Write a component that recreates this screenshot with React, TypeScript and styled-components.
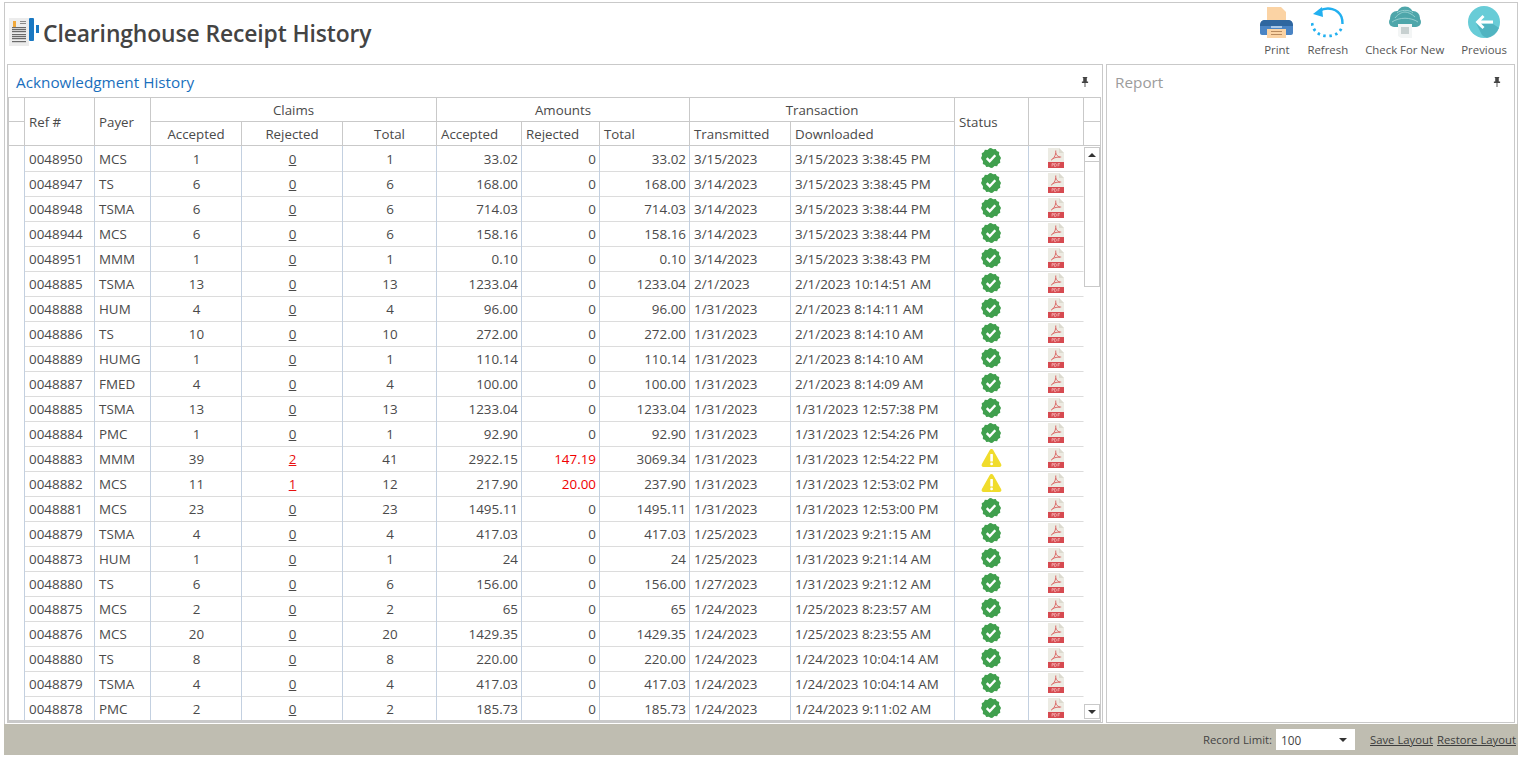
import React from "react";
import styled, { createGlobalStyle, css } from "styled-components";

const Global = createGlobalStyle`
  html, body { margin: 0; padding: 0; background: #fff; height: 100%; overflow: hidden; }
  body { font-family: "Open Sans", "Noto Sans", "Liberation Sans", sans-serif; color: #444; }
  #root { height: 100%; }
  * { box-sizing: border-box; }
`;

const COLS = "16px 70px 56px 91px 101px 94px 85px 78px 90px 101px 164px 74px 55px 16px";
const LINE = "#c9c9c9";
const ROWLINE = "#dcdcdc";
const VLINE = "#c3d0e0";

const Page = styled.div`
  width: 1521px; height: 758px; padding: 2px 3px 3px 4px; display: flex; flex-direction: column;
`;
const Frame = styled.div`
  flex: 1; min-height: 0; display: flex; flex-direction: column;
  border: 1px solid ${LINE}; border-bottom: none;
`;
const Header = styled.header`
  height: 60px; flex: none; display: flex; align-items: stretch; justify-content: space-between;
  padding: 0 10px 0 4px;
`;
const TitleGroup = styled.div`display: flex; align-items: flex-start; padding-top: 15px; gap: 3px;`;
const Title = styled.h1`
  margin: 0; font-size: 22.85px; line-height: 32px; font-weight: 600; color: #444; letter-spacing: -0.1px;
`;
const Toolbar = styled.nav`display: flex; gap: 17px; padding-top: 3px;`;
const ToolButton = styled.div<{ $pull?: boolean }>`
  display: flex; flex-direction: column; align-items: center; font-size: 11.4px; color: #555; line-height: 16px; white-space: nowrap;
  margin-left: ${p => (p.$pull ? "-3px" : "0")};
  svg { display: block; margin-bottom: 4px; }
`;
const Panels = styled.main`
  flex: 1; min-height: 0; display: flex; gap: 3px; padding: 1px 0 0 2px;
`;
const Panel = styled.section<{ $w: number }>`
  width: ${p => p.$w}px; flex: none; height: 659px; border: 1px solid ${LINE}; display: flex; flex-direction: column; background: #fff;
`;
const PanelHead = styled.div<{ $muted?: boolean }>`
  height: 32px; flex: none; display: flex; align-items: center; justify-content: space-between;
  padding: 1px 13px 0 8px; font-size: 15.3px; color: ${p => (p.$muted ? "#9c9c9c" : "#1a6fbd")};
`;
const Grid = styled.div`
  flex: 1; min-height: 0; margin-right: 1px; border: 1px solid ${LINE}; border-bottom-width: 2px; display: flex; flex-direction: column;
`;
const HeadGrid = styled.div`
  display: grid; grid-template-columns: ${COLS}; grid-template-rows: 24px 23px; flex: none; border-bottom: 1px solid ${LINE};
`;
const hc = css`
  border-right: 1px solid ${LINE}; font-size: 13.3px; color: #4a4a4a; display: flex; align-items: center; white-space: nowrap; min-width: 0;
`;
const HeadCell = styled.div<{ $col: string; $row: string; $align?: string; $line?: boolean; $end?: boolean }>`
  ${hc};
  grid-column: ${p => p.$col}; grid-row: ${p => p.$row};
  justify-content: ${p => p.$align || "flex-start"};
  padding: 0 4px;
  ${p => p.$line && `border-bottom: 1px solid ${LINE};`}
  ${p => p.$end && `border-right: none;`}
`;
const BodyArea = styled.div`flex: 1; min-height: 0; display: flex; position: relative; overflow: hidden;`;
const Rows = styled.div`flex: 1; min-width: 0;`;
const Row = styled.div`
  display: grid; grid-template-columns: ${COLS}; height: 25px;
`;
const Cell = styled.div<{ $align?: string; $red?: boolean; $blank?: boolean }>`
  border-right: 1px solid ${VLINE};
  border-bottom: ${p => (p.$blank ? "none" : `1px solid ${ROWLINE}`)};
  padding: 1px 3px 0 4px; font-size: 13.4px; line-height: 24px; color: ${p => (p.$red ? "#f00000" : "#4a4a4a")};
  text-align: ${p => p.$align || "left"}; white-space: nowrap;
`;
const Linked = styled.span<{ $red?: boolean }>`text-decoration: underline; color: ${p => (p.$red ? "#e81010" : "#4a4a4a")};`;
const IconCell = styled.div`
  border-right: 1px solid ${VLINE}; border-bottom: 1px solid ${ROWLINE}; display: flex; justify-content: center; align-items: center; padding: 0 1px 2px 0;
`;
const PdfCell = styled.div`
  border-bottom: 1px solid ${ROWLINE}; display: flex; justify-content: center; align-items: center; padding-right: 1px; padding-bottom: 1px;
  border-right: 1px solid transparent;
`;
const Scrollbar = styled.div`
  position: absolute; right: 0; top: 1px; bottom: 1px; width: 16px; display: flex; flex-direction: column; background: #fff;
`;
const ScrollBtn = styled.div<{ $down?: boolean }>`
  height: 15px; flex: none; border: 1px solid ${LINE}; display: flex; align-items: center; justify-content: center; background: #fff;
  &::after { content: ""; width: 0; height: 0; border-left: 4px solid transparent; border-right: 4px solid transparent;
    ${p => (p.$down ? "border-top: 4px solid #333;" : "border-bottom: 4px solid #333;")} }
`;
const ScrollTrack = styled.div`flex: 1;`;
const ScrollThumb = styled.div`height: 125px; border: 1px solid ${LINE}; border-top: none;`;
const Footer = styled.footer`
  height: 31px; flex: none; margin: 1px -1px 0; background: #bfbdb1; display: flex; align-items: center; justify-content: flex-end;
  padding: 0 2px 0 0; font-size: 11.3px; color: #444;
`;
const LimitLabel = styled.span`margin-right: 4px;`;
const LimitBox = styled.div`
  width: 79px; height: 21px; background: #fff; display: flex; align-items: center; justify-content: space-between; padding: 0 8px 0 5px; font-size: 11.8px; margin-right: 11px;
  &::after { content: ""; border-left: 4px solid transparent; border-right: 4px solid transparent; border-top: 4px solid #333; }
`;
const FootLink = styled.a`text-decoration: underline; color: #3d3d3d; margin-left: 4px; white-space: nowrap;`;

const Pin = () => (
  <svg width="8" height="10" viewBox="0 0 9 11"><path d="M2 0h5v1H6.500v4H8v1.500H5V11H4V6.500H1V5h1.500V1H2z" fill="#444" /></svg>
);

const Check = () => (
  <svg width="20" height="20" viewBox="0 0 20 20">
    <path fill="#40a04e" d="M10 0l2.200 1.300 2.500-.4 1.200 2.200 2.300 1-.2 2.600L19.500 9 20 10l-1 2.300.3 2.500-2.200 1.200-1 2.300-2.600-.2L11.600 19.700 10 20l-2.200-1.300-2.500.4-1.200-2.200-2.300-1 .2-2.600L.5 11 0 10l1-2.300L.7 5.200l2.200-1.200 1-2.300 2.600.2L8.400.3z" />
    <path d="M5.700 10.200l3 3 5.600-6" fill="none" stroke="#fff" strokeWidth="2.400" />
  </svg>
);
const Warn = () => (
  <svg width="21" height="20" viewBox="0 0 21 20">
    <path fill="#f0dc2c" d="M10.500 1c1 0 1.500.6 2 1.500l7.600 13.600c.8 1.600.1 2.900-1.700 2.900H2.600C.8 19 .1 17.700.9 16.100L8.500 2.500C9 1.600 9.500 1 10.500 1z" />
    <rect x="9.300" y="6" width="2.600" height="7.500" rx=".5" fill="#fff" />
    <rect x="9.200" y="14.500" width="2.800" height="2.800" rx="1.400" fill="#fff" />
  </svg>
);
const Pdf = () => (
  <svg width="16" height="20" viewBox="0 0 16 20">
    <path fill="#ecebe3" d="M0 0h11l5 5v10H0z" />
    <path fill="#dcdacf" d="M11 0l5 5h-5z" />
    <path d="M7.800 2.500c-.4 2 .3 3.700 1.600 5.200 1 1 2.400 1.500 3.800 1.300M7.700 5C7.400 8 5.500 11 3 12.200M4.500 10.800c2.300-1.300 4.600-1.800 7.500-1.600" stroke="#dc6a68" strokeWidth="1" fill="none" />
    <rect y="14" width="16" height="6" fill="#d64a50" />
    <path d="M4 18.500v-3h1.400v1.500H4M6.500 18.500v-3h1.300l.7 1.500-.7 1.500zM10 18.500v-3h2M10 17h1.600" fill="none" stroke="#f3b9ba" strokeWidth=".7" />
  </svg>
);

const DocIcon = () => (
  <svg width="31" height="29" viewBox="0 0 31 29">
    <rect x="0" y="0" width="20" height="28" fill="#ececec" />
    <rect x="4" y="3" width="3" height="6" fill="#f0a93c" />
    {[3, 5].map(y => <rect key={y} x="11" y={y} width="6" height="1" fill="#8a8a8a" />)}
    {[9, 11, 13, 16, 18, 20, 23].map(y => <rect key={y} x="3" y={y} width="14" height="1.200" fill="#6a6a6a" />)}
    <rect x="20" y="0" width="5" height="23" rx="1" fill="#1a78c2" />
    <rect x="27" y="7" width="3" height="8" fill="#1a78c2" />
  </svg>
);
const PrintIcon = () => (
  <svg width="33" height="32" viewBox="0 0 33 32">
    <path d="M7 1h14l5 5v9H7z" fill="#fbd3a4" />
    <path d="M0 20c0-4 2-6 5-6h23c3 0 5 2 5 6v7c0 1-1 2-2 2H2c-1 0-2-1-2-2z" fill="#4a84c4" />
    <path d="M0 20c0-4 2-6 5-6h23c3 0 5 2 5 6z" fill="#2f669f" />
    <rect x="11" y="20" width="11" height="2" fill="#a8c7e8" />
    <rect x="7" y="23" width="19" height="9" fill="#fbd3a4" />
    <rect x="11" y="25" width="11" height="1" fill="#b98a5d" />
    <rect x="11" y="28" width="11" height="1" fill="#b98a5d" />
  </svg>
);
const RefreshIcon = () => (
  <svg width="33" height="32" viewBox="0 0 33 32">
    <path d="M8 5c9-5 19-2 22.500 6 1 2.500 1 4.500 1 7" fill="none" stroke="#22b0f0" strokeWidth="2.400" />
    <path d="M2 8l9-7 1 10z" fill="#22b0f0" />
    <path d="M1 17c1 8 7 13 15.500 13 7 0 12-3 14-8" fill="none" stroke="#22b0f0" strokeWidth="2.800" strokeDasharray="2.500 3.500" />
  </svg>
);
const CloudIcon = () => (
  <svg width="32" height="32" viewBox="0 0 32 32">
    <g fill="#4ea6aa">
      <circle cx="16" cy="9" r="8.500" />
      <circle cx="8" cy="12" r="7" />
      <circle cx="24" cy="12" r="7" />
      <circle cx="5" cy="16" r="5" />
      <circle cx="27" cy="16" r="5" />
      <rect x="5" y="13" width="22" height="8" />
    </g>
    <path d="M6 12c3-4 7-6 10-6s7 2 10 5M8 7c3-3 12-4 16 0M3 16c7-5 19-5 26 0" fill="none" stroke="#a6d8d8" strokeWidth=".8" />
    <path d="M9 18h14v14h-11l-3-2z" fill="#f3f5f5" />
    <rect x="12" y="21" width="8" height="7" fill="#c7d0d0" />
  </svg>
);
const BackIcon = () => (
  <svg width="32" height="32" viewBox="0 0 32 32">
    <circle cx="16" cy="16" r="16" fill="#68ccd7" />
    <path d="M8 17l5 5 1-4h11l6 4a16 16 0 0 1-12 10 16 16 0 0 1-5-3z" fill="#4aaebb" opacity=".8" />
    <path d="M14.500 9L7.500 16l7 7 2-2-3.500-3.500H25v-3H13l3.500-3.500z" fill="#fff" />
  </svg>
);

type R = [string, string, number, number, number, string, string, string, string, string, boolean?];
const data: R[] = [
  ["0048950","MCS",1,0,1,"33.02","0","33.02","3/15/2023","3/15/2023 3:38:45 PM"],
  ["0048947","TS",6,0,6,"168.00","0","168.00","3/14/2023","3/15/2023 3:38:45 PM"],
  ["0048948","TSMA",6,0,6,"714.03","0","714.03","3/14/2023","3/15/2023 3:38:44 PM"],
  ["0048944","MCS",6,0,6,"158.16","0","158.16","3/14/2023","3/15/2023 3:38:44 PM"],
  ["0048951","MMM",1,0,1,"0.10","0","0.10","3/14/2023","3/15/2023 3:38:43 PM"],
  ["0048885","TSMA",13,0,13,"1233.04","0","1233.04","2/1/2023","2/1/2023 10:14:51 AM"],
  ["0048888","HUM",4,0,4,"96.00","0","96.00","1/31/2023","2/1/2023 8:14:11 AM"],
  ["0048886","TS",10,0,10,"272.00","0","272.00","1/31/2023","2/1/2023 8:14:10 AM"],
  ["0048889","HUMG",1,0,1,"110.14","0","110.14","1/31/2023","2/1/2023 8:14:10 AM"],
  ["0048887","FMED",4,0,4,"100.00","0","100.00","1/31/2023","2/1/2023 8:14:09 AM"],
  ["0048885","TSMA",13,0,13,"1233.04","0","1233.04","1/31/2023","1/31/2023 12:57:38 PM"],
  ["0048884","PMC",1,0,1,"92.90","0","92.90","1/31/2023","1/31/2023 12:54:26 PM"],
  ["0048883","MMM",39,2,41,"2922.15","147.19","3069.34","1/31/2023","1/31/2023 12:54:22 PM",true],
  ["0048882","MCS",11,1,12,"217.90","20.00","237.90","1/31/2023","1/31/2023 12:53:02 PM",true],
  ["0048881","MCS",23,0,23,"1495.11","0","1495.11","1/31/2023","1/31/2023 12:53:00 PM"],
  ["0048879","TSMA",4,0,4,"417.03","0","417.03","1/25/2023","1/31/2023 9:21:15 AM"],
  ["0048873","HUM",1,0,1,"24","0","24","1/25/2023","1/31/2023 9:21:14 AM"],
  ["0048880","TS",6,0,6,"156.00","0","156.00","1/27/2023","1/31/2023 9:21:12 AM"],
  ["0048875","MCS",2,0,2,"65","0","65","1/24/2023","1/25/2023 8:23:57 AM"],
  ["0048876","MCS",20,0,20,"1429.35","0","1429.35","1/24/2023","1/25/2023 8:23:55 AM"],
  ["0048880","TS",8,0,8,"220.00","0","220.00","1/24/2023","1/24/2023 10:04:14 AM"],
  ["0048879","TSMA",4,0,4,"417.03","0","417.03","1/24/2023","1/24/2023 10:04:14 AM"],
  ["0048878","PMC",2,0,2,"185.73","0","185.73","1/24/2023","1/24/2023 9:11:02 AM"],
];

export default function App() {
  return (
    <Page>
      <Global />
      <Frame>
        <Header>
          <TitleGroup><DocIcon /><Title>Clearinghouse Receipt History</Title></TitleGroup>
          <Toolbar>
            <ToolButton><PrintIcon />Print</ToolButton>
            <ToolButton $pull><RefreshIcon />Refresh</ToolButton>
            <ToolButton><CloudIcon />Check For New</ToolButton>
            <ToolButton><BackIcon />Previous</ToolButton>
          </Toolbar>
        </Header>
        <Panels>
          <Panel $w={1096}>
            <PanelHead>Acknowledgment History<Pin /></PanelHead>
            <Grid>
              <HeadGrid>
                <HeadCell $col="1" $row="1" $line />
                <HeadCell $col="1" $row="2" />
                <HeadCell $col="2" $row="1 / span 2">Ref #</HeadCell>
                <HeadCell $col="3" $row="1 / span 2">Payer</HeadCell>
                <HeadCell $col="4 / span 3" $row="1" $align="center" $line>Claims</HeadCell>
                <HeadCell $col="7 / span 3" $row="1" $align="center" $line>Amounts</HeadCell>
                <HeadCell $col="10 / span 2" $row="1" $align="center" $line>Transaction</HeadCell>
                <HeadCell $col="4" $row="2" $align="center">Accepted</HeadCell>
                <HeadCell $col="5" $row="2" $align="center">Rejected</HeadCell>
                <HeadCell $col="6" $row="2" $align="center">Total</HeadCell>
                <HeadCell $col="7" $row="2">Accepted</HeadCell>
                <HeadCell $col="8" $row="2">Rejected</HeadCell>
                <HeadCell $col="9" $row="2">Total</HeadCell>
                <HeadCell $col="10" $row="2">Transmitted</HeadCell>
                <HeadCell $col="11" $row="2">Downloaded</HeadCell>
                <HeadCell $col="12" $row="1 / span 2">Status</HeadCell>
                <HeadCell $col="13" $row="1 / span 2" />
                <HeadCell $col="14" $row="1" $line $end />
                <HeadCell $col="14" $row="2" $end />
              </HeadGrid>
              <BodyArea>
                <Rows>
                  {data.map((r, i) => (
                    <Row key={i}>
                      <Cell $blank />
                      <Cell>{r[0]}</Cell>
                      <Cell>{r[1]}</Cell>
                      <Cell $align="center">{r[2]}</Cell>
                      <Cell $align="center"><Linked $red={r[3] > 0}>{r[3]}</Linked></Cell>
                      <Cell $align="center">{r[4]}</Cell>
                      <Cell $align="right">{r[5]}</Cell>
                      <Cell $align="right" $red={r[6] !== "0"}>{r[6]}</Cell>
                      <Cell $align="right">{r[7]}</Cell>
                      <Cell>{r[8]}</Cell>
                      <Cell>{r[9]}</Cell>
                      <IconCell>{r[10] ? <Warn /> : <Check />}</IconCell>
                      <PdfCell><Pdf /></PdfCell>
                    </Row>
                  ))}
                </Rows>
                <Scrollbar>
                  <ScrollBtn />
                  <ScrollTrack><ScrollThumb /></ScrollTrack>
                  <ScrollBtn $down />
                </Scrollbar>
              </BodyArea>
            </Grid>
          </Panel>
          <Panel $w={409}>
            <PanelHead $muted>Report<Pin /></PanelHead>
          </Panel>
        </Panels>
        <Footer>
          <LimitLabel>Record Limit:</LimitLabel>
          <LimitBox>100</LimitBox>
          <FootLink>Save Layout</FootLink>
          <FootLink>Restore Layout</FootLink>
        </Footer>
      </Frame>
    </Page>
  );
}
